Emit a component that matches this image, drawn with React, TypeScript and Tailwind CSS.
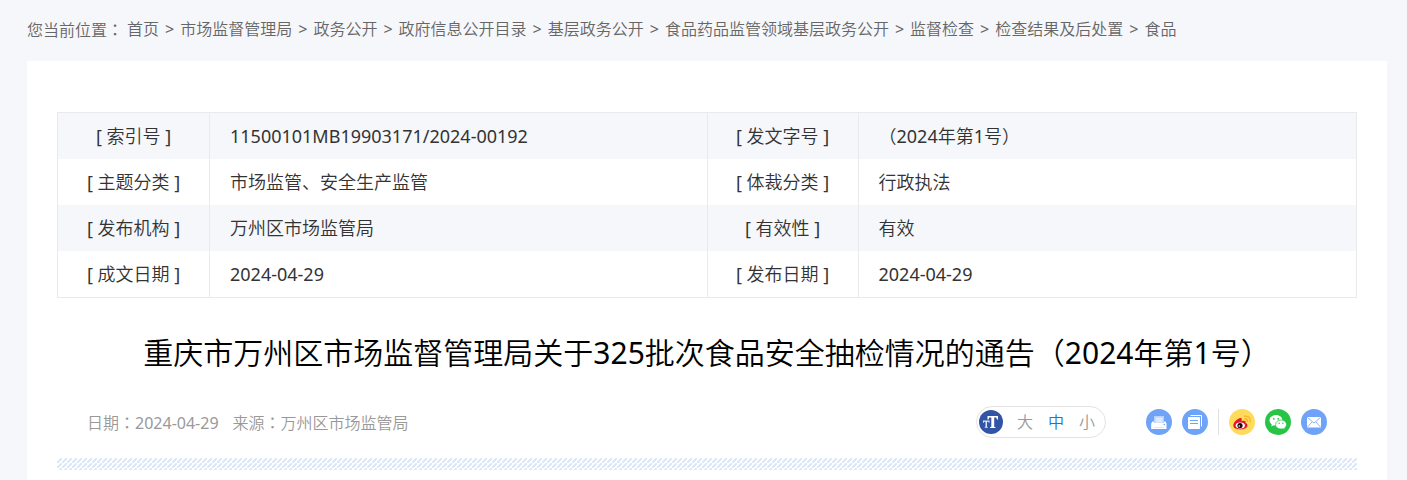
import { useState } from 'react'

const crumbs = [
  '首页',
  '市场监督管理局',
  '政务公开',
  '政府信息公开目录',
  '基层政务公开',
  '食品药品监管领域基层政务公开',
  '监督检查',
  '检查结果及后处置',
  '食品',
]

const rows = [
  ['索引号', '11500101MB19903171/2024-00192', '发文字号', '（2024年第1号）'],
  ['主题分类', '市场监管、安全生产监管', '体裁分类', '行政执法'],
  ['发布机构', '万州区市场监管局', '有效性', '有效'],
  ['成文日期', '2024-04-29', '发布日期', '2024-04-29'],
]

const sizes = ['大', '中', '小']

// Full-width colon set in the middle of its cell
function Colon() {
  return (
    <span lang="zh-TW" className="font-['Noto_Sans_CJK_TC',sans-serif]">：</span>
  )
}

function PrintIcon() {
  return (
    <svg viewBox="0 0 26 26" className="size-full">
      <circle cx="13" cy="13" r="13" fill="#6ea3f8" />
      <path d="M8 7h10v6H8z" fill="#b9d3fc" />
      <path d="M9.500 8.500h7v5h-7z" fill="#dce9fe" />
      <path d="M6.500 12.500h1.500v1h10v-1h1.500l1 2V20H5.200v-5.500z" fill="#fff" />
      <circle cx="18.300" cy="15.500" r=".8" fill="#6ea3f8" />
      <path d="M8 18.500h10" stroke="#dce9fe" />
    </svg>
  )
}

function CopyIcon() {
  return (
    <svg viewBox="0 0 26 26" className="size-full">
      <circle cx="13" cy="13" r="13" fill="#6ea3f8" />
      <path d="M8.500 6.500h11v11" fill="none" stroke="#fff" />
      <rect x="6" y="8" width="12" height="12" rx="1" fill="#fff" />
      <path d="M8 11.500h8M8 14.500h8" stroke="#6ea3f8" />
    </svg>
  )
}

function WeiboIcon() {
  return (
    <svg viewBox="0 0 26 26" className="size-full">
      <circle cx="13" cy="13" r="13" fill="#ffdb5c" />
      <path d="M11.500 9c-3 .5-7.200 4-7.200 7.500 0 5.200 13.700 5.200 14.200 0 .1-1.500-1-2.200-2-2.500.8-2-1-2.700-4-1.700.5-1.700.3-3.500-1-3.300z" fill="#e6162d" />
      <ellipse cx="11.300" cy="16.500" rx="4.600" ry="3" fill="#fff" />
      <circle cx="11" cy="16.500" r="2.600" fill="#111" />
      <circle cx="10.300" cy="17" r=".8" fill="#fff" />
      <path d="M15.500 7.200c3.800-.7 6.500 2 5.500 5.600M15.800 9.800c1.800-.3 3 .8 2.600 2.600" fill="none" stroke="#f9b02b" strokeWidth="1.300" strokeLinecap="round" />
    </svg>
  )
}

function WechatIcon() {
  return (
    <svg viewBox="0 0 26 26" className="size-full">
      <circle cx="13" cy="13" r="13" fill="#28c445" />
      <path d="M11 6c-3.800 0-6.500 2.400-6.500 5.300 0 1.700.9 3.100 2.300 4.100l-.5 2 2.300-1.200c.8.200 1.500.3 2.400.3 3.700 0 6.400-2.300 6.400-5.200S14.700 6 11 6z" fill="#fff" />
      <path d="M16 11c-3.100 0-5.500 2-5.500 4.500S12.900 20 16 20c.7 0 1.400-.1 2-.3l2 1-.5-1.700c1.200-.8 2-2 2-3.500 0-2.500-2.400-4.500-5.500-4.500z" fill="#fff" stroke="#28c445" strokeWidth=".7" />
      <g fill="#28c445">
        <circle cx="8.800" cy="9.800" r=".9" />
        <circle cx="13.200" cy="9.800" r=".9" />
        <circle cx="14.200" cy="14.300" r=".7" />
        <circle cx="17.900" cy="14.300" r=".7" />
      </g>
    </svg>
  )
}

function MailIcon() {
  return (
    <svg viewBox="0 0 26 26" className="size-full">
      <circle cx="13" cy="13" r="13" fill="#6ea3f8" />
      <rect x="6" y="8" width="14" height="10.500" rx=".5" fill="#fff" />
      <path d="M6.500 8.500l6.500 5.500 6.500-5.500M6.500 18l4.500-5M19.500 18l-4.500-5" fill="none" stroke="#6ea3f8" strokeWidth=".8" />
    </svg>
  )
}

function IconButton({ label, children }: { label: string; children: React.ReactNode }) {
  return (
    <button aria-label={label} className="size-[26px] cursor-pointer">
      {children}
    </button>
  )
}

export default function App() {
  const [size, setSize] = useState('中')

  return (
    <div
      lang="zh-CN"
      className="min-h-screen bg-[#f5f7fb] pr-5 pl-[27px] font-['Noto_Sans','Noto_Sans_CJK_SC_DemiLight','Noto_Sans_CJK_SC_Light','Noto_Sans_CJK_SC',sans-serif] text-[#333]"
    >
      {/* Breadcrumb */}
      <nav className="flex flex-wrap pt-[17px] pb-[19px] text-base leading-6 text-[#666]">
        <span className="mr-1">
          您当前位置<Colon />
        </span>
        {crumbs.map((crumb, i) => (
          <span key={crumb}>
            {i > 0 && <span className="mx-1.5">&gt;</span>}
            <a href="#">{crumb}</a>
          </span>
        ))}
      </nav>

      <main className="min-h-[419px] bg-white px-[30px] pt-[51px]">
        {/* Document info */}
        <table className="w-full table-fixed border-separate border-spacing-0 border border-[#eaeaea] text-lg leading-7">
          <colgroup>
            <col className="w-[152px]" />
            <col />
            <col className="w-[151px]" />
            <col />
          </colgroup>
          <tbody>
            {rows.map(([labelA, valueA, labelB, valueB]) => (
              <tr key={labelA} className="h-[46px] odd:bg-[#f5f7fb]">
                <th scope="row" className="border-r border-[#eaeaea] p-0 font-normal">[ {labelA} ]</th>
                <td className="border-r border-[#eaeaea] px-5 py-0">{valueA}</td>
                <th scope="row" className="border-r border-[#eaeaea] p-0 font-normal">[ {labelB} ]</th>
                <td className="px-5 py-0">{valueB}</td>
              </tr>
            ))}
          </tbody>
        </table>

        <h1 className="pt-[31px] text-center text-3xl leading-12 font-normal text-black">
          重庆市万州区市场监督管理局关于325批次食品安全抽检情况的通告（2024年第1号）
        </h1>

        {/* Meta and tools */}
        <div className="mt-[29px] flex flex-wrap items-center justify-between px-[30px]">
          <p className="flex gap-3.5 text-base text-[#999]">
            <span>日期<Colon />2024-04-29</span>
            <span>来源<Colon />万州区市场监管局</span>
          </p>
          <div className="flex items-center gap-10">
            <div className="flex h-8 items-center rounded-full border border-[#e3e3e3] pr-2.5 pl-0.5">
              <svg viewBox="0 0 24 24" className="mr-3.5 size-6">
                <circle cx="12" cy="12" r="12" fill="#3254a4" />
                <path d="M8.500 6h10.500v3.500h-1l-.8-2h-2v9.200l1.300.5v.8h-5.500v-.8l1.300-.5V7.500h-2l-.8 2h-1z" fill="#fff" />
                <path d="M4 10.500h6.500v2.300h-.8l-.4-1.100H8v5l.8.400v.7H5.700v-.7l.8-.4v-5H5.200l-.4 1.100H4z" fill="#dfe6f5" />
              </svg>
              <div className="flex gap-[15px]">
                {sizes.map((s) => (
                  <button
                    key={s}
                    onClick={() => setSize(s)}
                    className={s === size ? 'cursor-pointer text-base text-[#1a73e0]' : 'cursor-pointer text-base text-[#999]'}
                  >
                    {s}
                  </button>
                ))}
              </div>
            </div>
            <div className="flex items-center gap-2.5">
              <IconButton label="打印"><PrintIcon /></IconButton>
              <IconButton label="复制"><CopyIcon /></IconButton>
              <span className="h-[26px] w-px bg-[#e0e0e0]" />
              <IconButton label="微博"><WeiboIcon /></IconButton>
              <IconButton label="微信"><WechatIcon /></IconButton>
              <IconButton label="邮件"><MailIcon /></IconButton>
            </div>
          </div>
        </div>

        <div className="mt-5 h-3 bg-[linear-gradient(135deg,#fff_38%,#dde9f9_38%_62%,#fff_62%)] bg-size-[5px_5px]" />
      </main>
    </div>
  )
}
